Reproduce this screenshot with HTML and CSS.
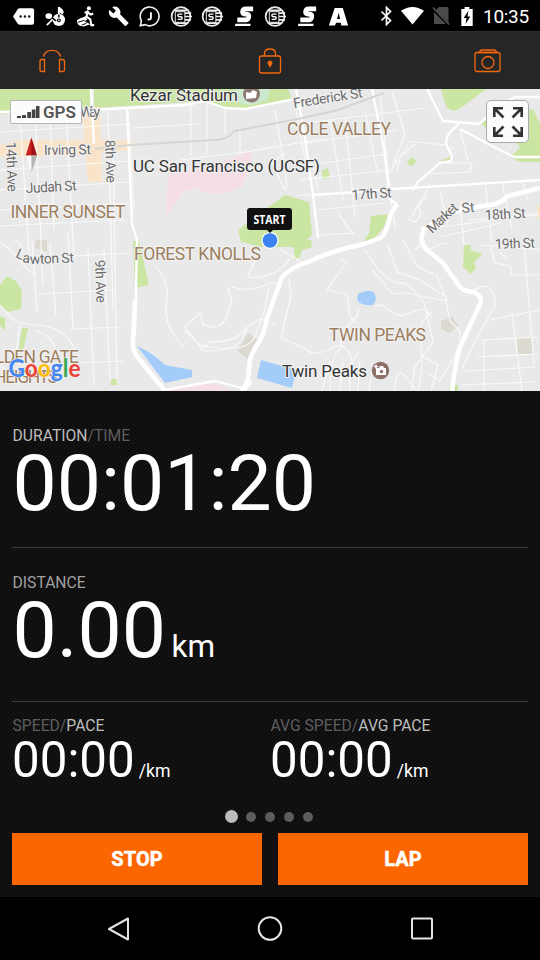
FILE: index.html
```
<!DOCTYPE html>
<html lang="en">
<head>
<meta charset="utf-8">
<title>Workout</title>
<link rel="stylesheet" href="styles.css">
</head>
<body>
<header class="status">
  <div class="notices">
    <svg viewBox="0 0 24 24"><path fill="#fff" d="M1 12 6 4.5Q7 3.500 8 3.500H21Q23 3.500 23 5.500V18.500Q23 20.500 21 20.500H8Q7 20.500 6 19.500Z"/><g fill="#111"><circle cx="9" cy="12" r="1.300"/><circle cx="13.500" cy="12" r="1.300"/><circle cx="18" cy="12" r="1.300"/></g></svg>
    <svg viewBox="0 0 24 24"><g fill="#fff"><ellipse cx="5" cy="11.500" rx="3.500" ry="3"/><circle cx="15.500" cy="15.500" r="6.500"/><path d="M14.500 2h2q6 4 3 8l-3-2v7h-2z"/></g><path d="m3 21 8-8" stroke="#fff" stroke-width="1.800"/><path d="m8.500 13.500 4 3M15.500 10v3" stroke="#000" stroke-width="1.500"/><circle cx="15.500" cy="16" r="2" fill="#000"/><circle cx="15.500" cy="16" r=".9" fill="#fff"/></svg>
    <svg viewBox="0 0 24 24"><circle cx="14.500" cy="3.500" r="2.100" fill="#fff"/><path d="m13.500 6-1.500 6 4 3 1 6h3M12 12l-4 3M10 8l3-1 3 3 3-1" fill="none" stroke="#fff" stroke-width="2.200"/><path d="M2 16q8-6 11-1l-3 2 6 3-7 2.500q-7 0-7-6.500Z" fill="#fff"/><path d="m3 18 7-2m-3 5 5-2" stroke="#000"/></svg>
    <svg viewBox="0 0 24 24"><path fill="#fff" d="m22.700 19-9.100-9.100c.9-2.300.4-5-1.500-6.900-2-2-5-2.400-7.400-1.300L9 6 6 9 1.600 4.700C.4 7.100.9 10.100 2.900 12.100c1.900 1.900 4.600 2.400 6.900 1.500l9.100 9.100c.4.4 1 .4 1.400 0l2.300-2.300c.5-.4.500-1.100.1-1.400z" transform="translate(1 .5) scale(.93)"/></svg>
    <svg viewBox="0 0 24 24"><path d="M2.500 21.500 3.500 16.500A9.800 9.800 0 1 1 7.500 20.500Z" fill="none" stroke="#eee" stroke-width="1.700"/><path d="M13.500 7.500v6q0 2-3.500 1.500" fill="none" stroke="#fff" stroke-width="1.900"/></svg>
    <svg viewBox="0 0 24 24"><use href="#coin"/></svg>
    <svg viewBox="0 0 24 24"><use href="#coin"/></svg>
    <svg viewBox="0 0 24 24"><use href="#ess"/></svg>
    <svg viewBox="0 0 24 24"><use href="#coin"/></svg>
    <svg viewBox="0 0 24 24"><use href="#ess"/></svg>
    <svg viewBox="0 0 24 24"><path fill="#fff" fill-rule="evenodd" d="M8 3h8.500L22 21.500h-7l-.7-3H9.500l-1.200 3H2ZM12.200 8l-1.700 6.500h3.200Z"/></svg>
  </div>
  <div class="system">
    <svg class="bt" viewBox="0 0 12 20"><path d="m1 5.500 9 9L6 18.500v-17l4 4-9 9" fill="none" stroke="#fff" stroke-width="1.700"/></svg>
    <svg class="wifi" viewBox="0 0 24 20"><path fill="#fff" d="M0 4.500Q12-3.500 24 4.500L12 19Z"/></svg>
    <svg class="sim" viewBox="0 0 18 20"><path fill="#4b4b4b" d="M7 1h8q1.500 0 1.500 1.500V18H2V6Z"/><path d="m0 2 17 17" stroke="#000" stroke-width="3"/><path d="m1 1.500 16 17" stroke="#555" stroke-width="1.500"/></svg>
    <svg class="battery" viewBox="0 0 12 20"><path fill="#fff" d="M3.500 0h5v2H12v18H0V2h3.500Z"/><path fill="#000" d="M7.500 4 2.500 11.500h3L4.500 18l5-8h-3Z"/></svg>
    <span class="clock">10:35</span>
  </div>
</header>

<nav class="toolbar">
  <svg viewBox="0 0 28 28"><path d="M5.500 9.500C7.500 1.200 20.500 1.200 22.500 9.500M6.500 12.500v12H3.700Q2 24.500 2 23v-8.500q0-2 2-2ZM21.500 12.500v12h3.300q1.700 0 1.700-1.500v-8.500q0-2-2-2Z"/></svg>
  <svg viewBox="0 0 28 28"><rect x="3.500" y="9" width="21" height="17" rx="2"/><path d="M8.500 9V6.500q0-4.500 5.500-4.500t5.500 4.500V9"/><path class="solid" d="M14 13.500a2.600 2.600 0 0 1 1.500 4.600L14 21l-1.500-2.900A2.600 2.600 0 0 1 14 13.500Z"/></svg>
  <svg viewBox="0 0 28 28"><rect x="1" y="5.500" width="25" height="19" rx="2"/><circle cx="14" cy="15.500" r="6"/><path d="M5 5.500 7 3h14l2 2.500Z"/></svg>
</nav>

<main>
  <section class="map">
    <svg class="tiles" viewBox="0 89 540 302" preserveAspectRatio="none">
      <rect y="89" width="540" height="302" fill="#e9e9e9"/>
      <g fill="#cbe6a3">
        <path d="M0 89H90V108L0 114ZM94 89H288L292 99 245 109 225 108 205 101 94 108ZM441 89h45l-25 19q-9 6-15-2ZM270 206l15-11 24 7 3 33-13 12-38 0-20-5-3-12ZM133 241h6l10 44-14 3ZM371 216l18-2-5 13-12 14h-8l5-8ZM293 240h18l1 7-10 3-2 7-5 3ZM0 285l7-9 9 5 6 10-1 18-13 3-8-7ZM0 316l5 2v12l-5-4ZM22 328h6l-5 22-4-1ZM464 245h7v5l12 4-9 8 2 6-5 6-8-7ZM480 123l8-4 10 12 29-20 6-2 7 14v39h-20l-10-5 10-10-5-6-15-2ZM322 170l6-2 2 10-8 1ZM408 160l5-3 3 5-4 4-5-2ZM440 161l12-5v5ZM112 379h6v6h-8ZM450 385h8v6h-9Z"/>
      </g>
      <path d="M238 89h32l-3 12-18 4-30-6Z" fill="#cce8ce"/>
      <g fill="#f9e4c9"><path d="M82 107h18l2 75H88ZM0 145l18-5h114v10l-54 5-78 2ZM537 206h3v12h-3Z"/></g>
      <path fill="#f5dfe5" d="M168 175l42-8q20-8 40-17l3 9-11 27q-14 10-37 7l-9-5-12 3-9 13-9 12ZM158 391l25-6 30-2 20 8Z"/>
      <g fill="#dcdad0"><path d="m248 333 12 8-11 19-12-9ZM441 321l11-4 6 8-8 8-9-4ZM517 337h14l2 17h-15ZM36 240h11v12l-12-4Z"/></g>
      <g fill="#a3ccfa"><path d="M137 346q16 7 28 19l27 5v7l-27 6ZM261 360l35 10-4 18-35-10ZM358 294q8-5 16-2 4 8-1 13-14 1-16-6Z"/></g>
      <g class="lane">
        <path d="M0 132 130 124M20 117l10 150M35 115l8 170M50 115l4 115M66 112l8 148M108 110l5 200M113 145l4 238M128 110l6 100M0 210l130-7M0 226l125-6M0 190l130-8M0 170l130-9M33 258l97-5M37 294l80-4M71 329l50-2M74 363l50-2M32 240l5 72M50 244l6 72M68 232l5 97M88 250l6 136M104 250l6 130M133 128l65-4M191 105v50M207 102v52M225 108v26M240 128v28M275 110l10 60 2 16-3 3-12-27 14-9M296 110l10 55"/>
        <path d="M180 160l65-8 77-13M313 165l5 25M305 123l120-15M307 143l90-13M308 165l80-11M300 180l88-10M317 210l68-7M320 235l34-2M330 120l13 80M345 118l10 100M365 110l12 60M380 95l10 92M392 92l13 42-12 30M338 212l10 16 5 5-34 2M313 195h-15"/>
        <path d="M14 240q15 8 4 16m-18-14 13 10q17 23 24 22M0 305q14 18 22 18l13 2q30 1 40 25M35 330q22 8 20 25M20 325l-5 35M0 365l20 20"/>
        <path d="M280 249l20 12M290 258q-8 17-39 20l-3-3 7-14M278 284l-8-1q-19 10-37 4l-5 2 4 13-4 9q-5 23-25 13l-3-11-15 14 19 24q30 0 38-11l6-13 12-8 16 5M185 330l15 15q44 10 55-8l9-25 5-26M200 350l10-8q30 0 36-15M289 278l2 18-10 42 25 11q7 8 24 0 12-9 20 5l5 25M340 260l8 0M327 290l20-29M327 290l20 4 3 22 5 6M155 265q14 18 12 32-4 21 6 36l10 14"/>
        <path d="M365 250q22 37 40 33l15 13 27 5 -10-25-20-10-14-26M387 243l10 29 23 8 25 16 5 25 10 10v15l-20 35-13-8M425 240l-10 10M428 250l14-7 5 1M490 245l5 18 16 3v9h29"/>
        <path d="M372 269l20 25q25-4 32 8l9 40-18 25-4 24M375 307q6-5 12 2 15 10 20 5 24-9 20-2l5 5M359 309q-2 11-10 15-11 15-7 25M432 312q-15 10-12 26 5 26-2 53M420 355l18 10-7 26"/>
        <path d="M330 391q0-35 10-42M350 391q-2-30 10-40M340 391l3-30M358 391l2-30M369 391l3-20M395 391q0-25 10-15l12 15M322 391l8-30"/>
        <path d="M389 187l6 40M407 141l38 4 9 4M395 162l20-18M408 145l-20 30M400 160l-3 10M427 195l-9 12 3 6-5 9-8-3M440 192l8 33M460 205l4 40M485 182l7 60M502 182l10 48M522 180l6 20M430 185l-15 25-3 7M425 174l45-2 2-9h-26M420 228l30-2 88-13M441 237l60-14M470 220l70-5M480 245l65 5M500 253l8 6M524 244l10 120M490 320l50-10M482 340l55-3M477 357l60-3M466 371l70-4M460 385l75-3M512 313l10 78M484 340v51M468 292l15-6q12 1 12 20l-20 35-13 28M460 130l8 30"/>
      </g>
      <g class="road">
        <path d="M0 112 90 110 185 105 205 101 225 108 245 109 295 99M91 89l3 55M127 109l5 115 5 16-2 95M296 89 304 132 313 195 318 238M313 195l30-2 49-4 148-9M427 89l16 32 36 3 20-17 16-10h25M372 89l12 60 6 50 7 5M459 124q-16 12-12 22l5 10-1 5-11 2-22 19-5 8M460 129l32 17 22 11h30M165 390l50-9 31 8 6-8"/>
        <path class="wide" d="M135 300 133 342q-1 8 6 17l26 32M397 204l-7 12q-4 20-10 22-10 4-20 7-26 5-50 16-20 7-28 16L267 318q-3 15-7 22-8 12-10 20l-2 20-6 11M540 188 508 196q-10 9-20 9l-28 5q-19 8-36 19-6 12 3 21l16 13 17 24q6 5 14 5 9 5 6 12-4 9-20 43-5 16-8 44"/>
      </g>
      <path d="M95 149 130 145l84-5q14 0 20-9l64-12 40-9 46-17" fill="none" stroke="#d5d5d5" stroke-width="2"/>
      <g class="street">
        <text x="80" y="117" textLength="20">Way</text>
        <text x="44" y="155" textLength="47" transform="rotate(-1 45 155)">Irving St</text>
        <text x="26" y="193" textLength="51" transform="rotate(-3 26 193)">Judah St</text>
        <text x="6" y="142" textLength="50" transform="rotate(88 6 142)">14th Ave</text>
        <text x="105" y="140" textLength="43" transform="rotate(88 105 140)">8th Ave</text>
        <text x="95" y="260" textLength="43" transform="rotate(88 95 260)">9th Ave</text>
        <text x="15" y="257" transform="rotate(24 15 257)">L</text>
        <text x="22" y="262" transform="rotate(10 22 262)">a</text>
        <text x="30" y="264" textLength="44" transform="rotate(-2 30 264)">wton St</text>
        <text x="294" y="108" textLength="70" transform="rotate(-9 295 108)">Frederick St</text>
        <text x="352" y="200" textLength="40" transform="rotate(-4 352 200)">17th St</text>
        <text x="432" y="234" textLength="37" transform="rotate(-43 432 234)">Market</text>
        <text x="462" y="213" textLength="13" transform="rotate(-5 462 213)">St</text>
        <text x="485" y="220" textLength="41" transform="rotate(-3 485 220)">18th St</text>
        <text x="495" y="249" textLength="40" transform="rotate(-2 495 249)">19th St</text>
      </g>
      <g class="area">
        <text x="287" y="135" textLength="104">COLE VALLEY</text>
        <text x="10.500" y="218" textLength="115">INNER SUNSET</text>
        <text x="134" y="260" textLength="127">FOREST KNOLLS</text>
        <text x="329" y="341" textLength="97">TWIN PEAKS</text>
        <text x="-5" y="363" textLength="84">LDEN GATE</text>
        <text x="-6" y="383" textLength="64">HEIGHTS</text>
      </g>
      <g class="place">
        <text x="130" y="101" textLength="108">Kezar Stadium</text>
        <text x="133" y="172" textLength="187">UC San Francisco (UCSF)</text>
        <text x="282" y="377" textLength="85">Twin Peaks</text>
      </g>
      <circle cx="251.500" cy="94" r="8.500" fill="#8d7771"/><path fill="#fff" d="m246 92 4 1 3-3 4 2-1 6-10 1Z"/>
      <circle cx="380.500" cy="370.500" r="8.700" fill="#8d7068"/><path fill="#fff" d="M376 368h3l1-2h3l1 2h2v7h-10ZM376 364l1 2 2 .5-2 .7-1 2-1-2-2-.7 2-.5Z"/><circle cx="381.500" cy="371.500" r="1.700" fill="#8d7068"/>
      <text class="google" x="8.500" y="376.500" textLength="72" lengthAdjust="spacingAndGlyphs"><tspan fill="#4285f4">G</tspan><tspan fill="#ea4335">o</tspan><tspan fill="#fbbc05">o</tspan><tspan fill="#4285f4">g</tspan><tspan fill="#34a853">l</tspan><tspan fill="#ea4335">e</tspan></text>
      <path fill="#a01015" d="m31.500 137.500 5.500 18H26Z"/><path fill="#c8201f" d="m31.500 137.500-5.500 18h5.500Z"/><path fill="#fafafa" d="M26 155.500h5.500v17Z"/><path fill="#b4b4b4" d="M31.500 155.500H37l-5.500 17Z"/>
      <circle cx="270" cy="240.500" r="8.500" fill="#fff"/><circle cx="270" cy="240.500" r="7.300" fill="#3d83ef"/>
      <path fill="#111" d="M250 208h39q3 0 3 3v16q0 3-3 3h-16l-3 3-3-3h-17q-3 0-3-3v-16q0-3 3-3Z"/>
      <text class="start" x="253.500" y="223.500" textLength="32" lengthAdjust="spacingAndGlyphs">START</text>
    </svg>
    <div class="gps">
      <svg viewBox="0 0 23 13"><path fill="#444" d="M0 10h4v2H0ZM5 9h4v3H5ZM10.300 6h3.700v6h-3.700ZM14.800 3.500h3.700V12h-3.700ZM19 0h3.500v12H19Z"/></svg>
      <span>GPS</span>
    </div>
    <button class="expand" aria-label="Expand map">
      <svg viewBox="0 0 30 30" fill="none" stroke="#333" stroke-width="2.600"><path d="M1.300 10V1.300H10M2 2l8.500 8.500M20 1.300h8.700V10M28 2l-8.500 8.500M1.300 20v8.700H10M2 28l8.500-8.500M20 28.700h8.700V20M28 28l-8.500-8.500"/></svg>
    </button>
  </section>

  <section class="stats">
    <div class="metric duration">
      <div class="label">DURATION<i>/TIME</i></div>
      <div class="value">00:01:20</div>
    </div>
    <div class="metric distance">
      <div class="label dim">DISTANCE</div>
      <div class="value">0.00<small>km</small></div>
    </div>
    <div class="pair">
      <div><div class="label"><i>SPEED/</i>PACE</div><div class="value">00:00<small>/km</small></div></div>
      <div><div class="label"><i>AVG SPEED/</i>AVG PACE</div><div class="value">00:00<small>/km</small></div></div>
    </div>
    <div class="pager"><b class="on"></b><b></b><b></b><b></b><b></b></div>
    <div class="actions"><button>STOP</button><button>LAP</button></div>
  </section>
</main>

<footer class="keys">
  <svg viewBox="0 0 26 26"><path d="M23 2.500v21L4 13Z"/></svg>
  <svg viewBox="0 0 26 26"><circle cx="13" cy="12.500" r="11.300"/></svg>
  <svg viewBox="0 0 26 26"><rect x="3" y="2.500" width="20" height="20" rx="1"/></svg>
</footer>

<svg class="defs">
  <g id="coin"><circle cx="11.500" cy="12" r="9.800" fill="none" stroke="#eee" stroke-width="1.800"/><path d="M5 5.500h13M14 8.500h8M14 12h9M14 15.500h8M5 19h13" stroke="#eee" stroke-width="1.800"/><rect x="5.500" y="7" width="10" height="11" fill="#000" stroke="#eee"/><path d="M13 9.500H9.500q-1.300 0-1.300 1.300t1.300 1.500h2q1.200 0 1.200 1.300T11.500 15H8" fill="none" stroke="#fff" stroke-width="1.500"/></g>
  <g id="ess"><path d="M21 4H13.500q-3 0-3.500 2.500t2 3h2.500q2.500 0 2 3T14 15.500H4.500" fill="none" stroke="#fff" stroke-width="4.800"/><path d="M2.500 19.500h16l-.5 2.500H2Z" fill="#fff"/></g>
</svg>
</body>
</html>
```
FILE: styles.css
```
* { box-sizing: border-box; }
body {
  margin: 0;
  width: 540px;
  height: 960px;
  display: flex;
  flex-direction: column;
  overflow: hidden;
  background: #000;
  color: #fff;
  font-family: Roboto, "Liberation Sans", sans-serif;
}
svg { display: block; flex: none; }
button { border: 0; padding: 0; font-family: inherit; }
.defs { width: 0; height: 0; position: absolute; }

.status { height: 31px; display: flex; justify-content: space-between; padding: 1px 11px 0 8px; }
.notices { display: flex; align-items: center; }
.notices svg { width: 23px; height: 23px; margin: 0 4.250px; }
.system { display: flex; align-items: center; }
.bt { width: 13px; height: 20px; margin-right: 8px; }
.wifi { width: 23px; height: 20px; margin-right: 8px; }
.sim { width: 18px; height: 20px; margin-right: 11px; }
.battery { width: 12px; height: 19px; margin-right: 10px; }
.clock { font-size: 19px; line-height: 30px; width: 46px; white-space: nowrap; letter-spacing: -.3px; padding-top: 1px; }

.toolbar {
  height: 58px;
  background: #262626;
  border-top: 1px solid #2e2e2e;
  display: flex;
  justify-content: space-between;
  align-items: center;
  padding: 0 38px;
}
.toolbar svg { width: 28px; height: 28px; fill: none; stroke: #f26a10; stroke-width: 1.300; }
.toolbar .solid { fill: #f26a10; stroke: none; }

.map { position: relative; height: 302px; }
.tiles { width: 540px; height: 302px; }
.lane { fill: none; stroke: #f9f9f9; stroke-width: 1.200; stroke-linejoin: round; }
.road { fill: none; stroke: #fff; stroke-width: 2.300; stroke-linejoin: round; }
.road .wide { stroke-width: 4.500; }
.tiles text { paint-order: stroke; stroke: #f3f3f3; stroke-width: 2px; stroke-linejoin: round; }
.street { font-size: 14px; fill: #6c6c6c; }
.area { font-size: 17.500px; fill: #9c7f5f; }
.place { font-size: 17px; fill: #333; }
.tiles .google { font-family: Lato, sans-serif; font-size: 24px; font-weight: 700; stroke-width: 1px; }
.tiles .start { font-family: "Open Sans", sans-serif; font-size: 12px; font-weight: 700; fill: #fff; stroke: none; }
.gps {
  position: absolute;
  left: 10px;
  top: 11px;
  width: 72px;
  height: 24px;
  display: flex;
  align-items: center;
  gap: 3px;
  padding-left: 6px;
  background: #fcfcfc;
  border: 1px solid #b5b5b5;
  border-radius: 2px;
  color: #555;
  font-size: 17px;
  font-weight: 600;
}
.gps svg { width: 23px; height: 13px; }
.expand {
  position: absolute;
  left: 486px;
  top: 11px;
  width: 43px;
  height: 43px;
  display: grid;
  place-items: center;
  background: #fcfcfc;
  border: 1px solid #aaa;
  border-radius: 5px;
}
.expand svg { width: 30px; height: 30px; }

.stats {
  height: 506px;
  padding: 0 12px;
  background: repeating-linear-gradient(135deg, #0b0b0b 0 1.414px, #151515 1.414px 2.828px);
}
.metric { border-bottom: 1px solid #3a3a3a; }
.duration { height: 157px; padding-top: 36px; }
.distance { height: 154px; padding-top: 26px; }
.label { font-size: 15.700px; line-height: 18px; color: #bdbdbd; white-space: nowrap; padding-left: .5px; }
.label.dim { color: #a0a0a0; }
.label i { font-style: normal; color: #5e5e5e; }
.value { font-size: 78.700px; line-height: 76px; white-space: nowrap; padding-left: .5px; }
.value small { font-size: 31.500px; margin-left: 5.500px; }
.pair { display: flex; height: 103px; padding-top: 15px; }
.pair > div { width: 258px; }
.pair .value { font-size: 49.300px; line-height: 50px; padding-left: 0; }
.pair small { font-size: 17.700px; margin-left: 4px; }
.pager { height: 23px; margin-bottom: 3px; display: flex; justify-content: center; align-items: center; gap: 9.200px; padding-right: 2px; }
.pager b { flex: none; width: 10px; height: 10px; border-radius: 50%; background: #5c5c5c; }
.pager .on { width: 13px; height: 13px; background: #bcbcbc; margin-right: -1px; }
.actions { display: flex; gap: 16px; padding-top: 2px; }
.actions button { flex: 1; height: 52px; background: #fc6600; color: #fff; font-size: 20px; font-weight: 800; -webkit-text-stroke: .3px #fff; }

.keys { height: 63px; display: flex; justify-content: space-between; align-items: center; padding: 0 105px 0 105px; }
.keys svg { width: 26px; height: 26px; fill: none; stroke: #e4e4e4; stroke-width: 2; stroke-linejoin: round; }
```
